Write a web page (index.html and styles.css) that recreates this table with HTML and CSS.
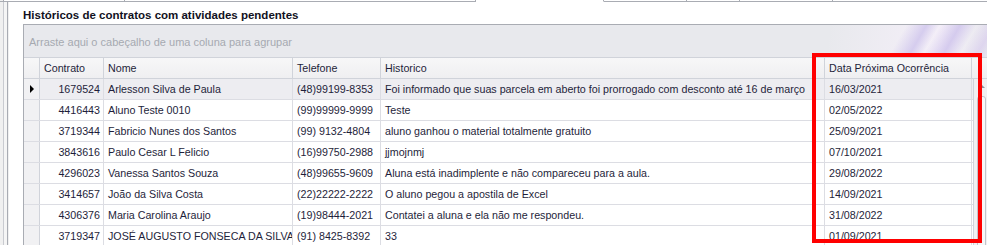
FILE: index.html
```html
<!DOCTYPE html>
<html lang="pt-BR">
	<head>
		<meta charset="utf-8">
		<title>Históricos pendentes</title>
		<link rel="stylesheet" href="styles.css">
	</head>
	<body>
		<div class="tabs">
			<span class="tab t1"></span>
			<span class="tab t2"></span>
			<span class="tab t3"></span>
			<span class="tab active"></span>
			<span class="tab t5"></span>
			<span class="tab t6"></span>
			<span class="tab t7"></span>
			<span class="tab t8"></span>
		</div>
		<div class="window">
			<div class="edge"><div class="edge-in"></div></div>
			<div class="panel">
				<div class="title">Históricos de contratos com atividades pendentes</div>
				<div class="grid">
					<div class="group-panel">Arraste aqui o cabeçalho de uma coluna para agrupar</div>
					<div class="head">
						<div class="hcell"></div>
						<div class="hcell">Contrato</div>
						<div class="hcell">Nome</div>
						<div class="hcell">Telefone</div>
						<div class="hcell">Historico</div>
						<div class="hcell">Data Próxima Ocorrência</div>
						<div class="hcell last"></div>
					</div>
					<div class="body">
						<div class="rows">
							<div class="row focused">
								<div class="ind"><span class="arrow"></span></div>
								<div class="cell num">1679524</div>
								<div class="cell">Arlesson Silva de Paula</div>
								<div class="cell">(48)99199-8353</div>
								<div class="cell">Foi informado que suas parcela em aberto foi prorrogado com desconto até 16 de março</div>
								<div class="cell">16/03/2021</div>
							</div>
							<div class="row">
								<div class="ind"></div>
								<div class="cell num">4416443</div>
								<div class="cell">Aluno Teste 0010</div>
								<div class="cell">(99)99999-9999</div>
								<div class="cell">Teste</div>
								<div class="cell">02/05/2022</div>
							</div>
							<div class="row">
								<div class="ind"></div>
								<div class="cell num">3719344</div>
								<div class="cell">Fabricio Nunes dos Santos</div>
								<div class="cell">(99) 9132-4804</div>
								<div class="cell">aluno ganhou o material totalmente gratuito</div>
								<div class="cell">25/09/2021</div>
							</div>
							<div class="row">
								<div class="ind"></div>
								<div class="cell num">3843616</div>
								<div class="cell">Paulo Cesar L Felicio</div>
								<div class="cell">(16)99750-2988</div>
								<div class="cell">jjmojnmj</div>
								<div class="cell">07/10/2021</div>
							</div>
							<div class="row">
								<div class="ind"></div>
								<div class="cell num">4296023</div>
								<div class="cell">Vanessa Santos Souza</div>
								<div class="cell">(48)99655-9609</div>
								<div class="cell">Aluna está inadimplente e não compareceu para a aula.</div>
								<div class="cell">29/08/2022</div>
							</div>
							<div class="row">
								<div class="ind"></div>
								<div class="cell num">3414657</div>
								<div class="cell">João da Silva Costa</div>
								<div class="cell">(22)22222-2222</div>
								<div class="cell">O aluno pegou a apostila de Excel</div>
								<div class="cell">14/09/2021</div>
							</div>
							<div class="row">
								<div class="ind"></div>
								<div class="cell num">4306376</div>
								<div class="cell">Maria Carolina Araujo</div>
								<div class="cell">(19)98444-2021</div>
								<div class="cell">Contatei a aluna e ela não me respondeu.</div>
								<div class="cell">31/08/2022</div>
							</div>
							<div class="row">
								<div class="ind"></div>
								<div class="cell num">3719347</div>
								<div class="cell">JOSÉ AUGUSTO FONSECA DA SILVA</div>
								<div class="cell">(91) 8425-8392</div>
								<div class="cell">33</div>
								<div class="cell">01/09/2021</div>
							</div>
						</div>
						<div class="vscroll">
							<div class="up"></div>
							<div class="thumb"></div>
						</div>
					</div>
				</div>
			</div>
		</div>
		<div class="mark"></div>
	</body>
</html>
```

FILE: styles.css
```css
body {
	margin: 0px;
	width: 987px;
	height: 245px;
	overflow: hidden;
	background-color: #ffffff;
	font-family: "Liberation Sans", Arial, sans-serif;
	font-size: 10.7px;
	color: #1e1e3a;
	position: relative;
}

/* tab strip remains at the very top */
.tabs {
	display: flex;
	height: 2px;
}

.tab {
	height: 1px;
	border-bottom: 1px solid #a9acb3;
	border-right: 1px solid #a9acb3;
}

.t1 { width: 3px; background: #f0f0f0; }
.t2 { width: 120px; }
.t3 { width: 350px; }
.tab.active { width: 127px; border-bottom-color: transparent; }
.t5 { width: 82px; }
.t6 { width: 52px; }
.t7 { width: 92px; }
.t8 { flex: 1; border-right: 0; }

.window {
	display: grid;
	grid-template-columns: 9px 1fr;
	height: 243px;
}

.edge {
	background-color: #f0f0f0;
	padding-left: 3px;
}

.edge-in {
	height: 100%;
	border-left: 1px solid #c9cbd0;
	border-right: 1px solid #a9acb3;
	width: 3px;
	background: #f5f5f5;
}

.panel {
	padding: 6px 0 0 14px;
	overflow: hidden;
}

.title {
	font-weight: bold;
	font-size: 11.5px;
	line-height: 15px;
	height: 16px;
	color: #111122;
}

.grid {
	border-left: 1px solid #a9acb3;
	border-top: 1px solid #a9acb3;
	width: 965px;
}

.group-panel {
	height: 32px;
	line-height: 34px;
	padding-left: 5px;
	font-size: 11px;
	color: #a6a9b1;
	background-color: #e8e9ed;
	background-image:
		linear-gradient(120deg, rgba(232,233,237,0) 0%, rgba(232,233,237,0) 40%, rgba(206,196,236,0.8) 52%, rgba(232,233,237,0) 60%, rgba(200,188,234,0.7) 72%, rgba(232,233,237,0) 82%, rgba(214,200,238,0.6) 92%, rgba(232,233,237,0) 100%),
		linear-gradient(100deg, rgba(232,233,237,0) 0%, rgba(246,240,250,0.9) 70%, rgba(232,233,237,0) 100%);
	background-size: 150px 32px, 160px 32px;
	background-position: right top, right top;
	background-repeat: no-repeat;
	border-bottom: 1px solid #d0d3da;
}

.head,
.row {
	display: grid;
	grid-template-columns: 16px 64px 189px 88px 444px 147px;
}

.head {
	grid-template-columns: 16px 64px 189px 88px 444px 147px 1fr;
	height: 20px;
	background: linear-gradient(#f7f7f8, #efeff1);
	border-bottom: 1px solid #d0d3da;
}

.hcell {
	border-right: 1px solid #d0d3da;
	line-height: 20px;
	padding-left: 4px;
	white-space: nowrap;
	overflow: hidden;
}

.hcell.last {
	border-right: 0;
}

.body {
	display: flex;
}

.rows {
	flex: 1;
}

.row {
	height: 20px;
	border-bottom: 1px solid #dcdde3;
}

.row.focused {
	background-color: #ededf1;
}

.ind {
	background-color: #f1f1f3;
	border-right: 1px solid #d0d3da;
	display: flex;
	align-items: center;
	justify-content: center;
}

.arrow {
	width: 0;
	height: 0;
	border-top: 4px solid transparent;
	border-bottom: 4px solid transparent;
	border-left: 4px solid #000000;
	margin-left: 1px;
}

.cell {
	border-right: 1px solid #dcdde3;
	line-height: 20px;
	padding-left: 4px;
	white-space: nowrap;
	overflow: hidden;
}

.cell.num {
	text-align: right;
	padding: 0 3px 0 0;
}

.vscroll {
	width: 15px;
	background-color: #f0f0f2;
	border-left: 1px solid #d0d3da;
	height: 167px;
}

.up {
	width: 0;
	height: 0;
	margin: 6px 0 0 5px;
	border-left: 3px solid transparent;
	border-right: 3px solid transparent;
	border-bottom: 3px solid #8e9199;
}

.thumb {
	margin: 8px 0 0 3px;
	width: 7px;
	height: 160px;
	border: 1px solid #c2c4ca;
	border-radius: 3px;
	background: #f7f7f8;
}

/* highlight drawn over the date column */
.mark {
	position: absolute;
	left: 812px;
	top: 53px;
	width: 162px;
	height: 182px;
	border: 4px solid #ff0000;
}
```
